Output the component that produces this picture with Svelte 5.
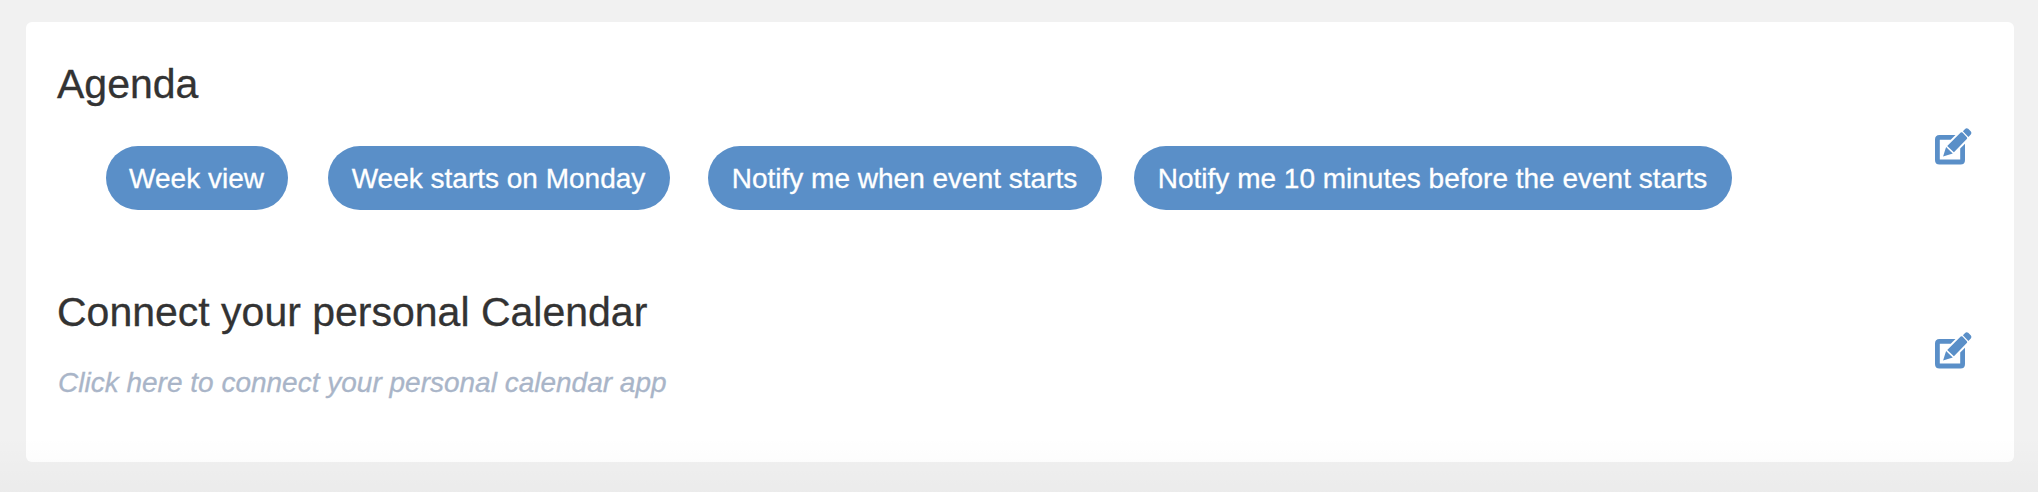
<script>
  const preferences = [
    { label: 'Week view', width: 182, gap: 0 },
    { label: 'Week starts on Monday', width: 342, gap: 40 },
    { label: 'Notify me when event starts', width: 394, gap: 38 },
    { label: 'Notify me 10 minutes before the event starts', width: 598, gap: 32 }
  ];
</script>

{#snippet editIcon()}
  <svg width="38" height="38" viewBox="0 0 38 38" aria-hidden="true">
    <path d="M20.5 7H4.5Q0 7 0 11.5V31.9Q0 36.4 4.5 36.4H25.5Q30 36.4 30 31.9V15.8L25.2 20.6V31.6H4.8V11.8H15.7Z" />
    <path d="M12.2 17.9 25.7 4.6Q26.6 3.8 27.5 4.6L31.9 9.3Q32.6 10.2 31.8 11L18.9 24.2Z" />
    <path d="M11.1 19 17.8 25.4 8.1 28.5Z" />
    <path d="M27.9 3.2 30.1 1Q31.5-.5 33.2.8L35.9 3.5Q37.1 5.2 35.8 6.5L33.4 8.9Z" />
  </svg>
{/snippet}

<main>
  <section class="card">
    <div class="row agenda">
      <div class="content">
        <h2>Agenda</h2>
        <div class="pills">
          {#each preferences as item}
            <span class="pill" style="width: {item.width}px; margin-left: {item.gap}px">{item.label}</span>
          {/each}
        </div>
      </div>
      <button aria-label="Edit agenda">{@render editIcon()}</button>
    </div>
    <div class="row connect">
      <div class="content">
        <h2>Connect your personal Calendar</h2>
        <p>Click here to connect your personal calendar app</p>
      </div>
      <button aria-label="Edit calendar connection">{@render editIcon()}</button>
    </div>
  </section>
  <div class="fade"></div>
</main>

<style>
  :global(body) { margin: 0; background: #f1f1f1; }
  main {
    position: relative;
    box-sizing: border-box;
    height: 492px;
    padding: 22px 24px 30px 26px;
    overflow: hidden;
    background: #f1f1f1;
    font-family: "Liberation Sans", Arial, sans-serif;
    -webkit-text-stroke: .3px currentColor;
  }
  .card {
    box-sizing: border-box;
    height: 440px;
    padding: 40px 41px 0 31px;
    border-radius: 6px;
    background: #fff;
  }
  .row { display: flex; justify-content: space-between; align-items: flex-start; }
  .agenda { height: 228px; }
  h2 {
    margin: 0;
    color: #333;
    font-size: 41px;
    line-height: 44px;
    font-weight: 400;
    white-space: nowrap;
  }
  .pills { display: flex; margin: 40px 0 0 49px; }
  .pill {
    box-sizing: border-box;
    flex: none;
    height: 64px;
    border-radius: 32px;
    background: #5a8fc8;
    color: #fff;
    font-size: 28px;
    line-height: 66px;
    text-align: center;
    text-indent: -1px;
    white-space: nowrap;
  }
  p {
    margin: 33px 0 0 1px;
    color: #a9b5c8;
    font-size: 28px;
    line-height: 32px;
    font-style: italic;
    white-space: nowrap;
  }
  button {
    display: block;
    flex: none;
    width: 38px;
    height: 38px;
    margin: 66px 0 0;
    padding: 0;
    border: 0;
    background: none;
  }
  .connect button { margin-top: 42px; }
  svg { display: block; fill: #5a8fc8; overflow: visible; }
  .fade {
    position: absolute;
    inset: auto 0 0;
    height: 56px;
    background: linear-gradient(rgba(0, 0, 0, 0), rgba(0, 0, 0, .022));
    pointer-events: none;
  }
</style>
